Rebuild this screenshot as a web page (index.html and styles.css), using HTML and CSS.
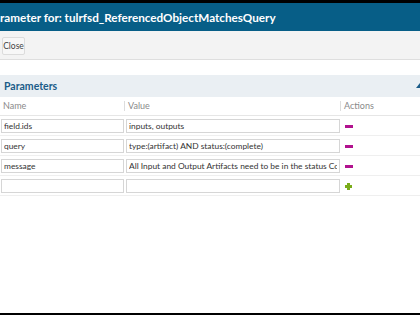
FILE: index.html
```html
<html><head>
<meta charset="UTF-8">
<meta name="viewport" content="width=device-width, initial-scale=1.0">
<title>Parameter for: tulrfsd_ReferencedObjectMatchesQuery</title>
<link rel="stylesheet" href="styles.css">
</head>
<body>
  <div class="dialog">
    <div class="titlebar"><span class="title">Parameter for: tulrfsd_ReferencedObjectMatchesQuery</span></div>

    <div class="toolbar">
      <button class="btn">Close</button>
    </div>

    <div class="panel">
      <div class="panel-header">
        <span>Parameters</span>
        <span class="collapse"></span>
      </div>

      <div class="grid-head">
        <div class="col">Name</div>
        <div class="col sep">Value</div>
        <div class="col sep">Actions</div>
        <div class="col sep"></div>
      </div>

      <div class="grid-row">
        <input class="cell name" value="field.ids">
        <input class="cell value" value="inputs, outputs">
        <span class="act"><span class="minus"></span></span>
      </div>
      <div class="grid-row">
        <input class="cell name" value="query">
        <input class="cell value" value="type:(artifact) AND status:(complete)">
        <span class="act"><span class="minus"></span></span>
      </div>
      <div class="grid-row">
        <input class="cell name" value="message">
        <input class="cell value" value="All Input and Output Artifacts need to be in the status Complete">
        <span class="act"><span class="minus"></span></span>
      </div>
      <div class="grid-row">
        <input class="cell name" value="">
        <input class="cell value" value="">
        <span class="act"><span class="plus"></span></span>
      </div>
    </div>
  </div>
</body></html>
```

FILE: styles.css
```css
body {
  margin: 0;
  background-color: #000;
  font-family: Lato, "Open Sans", sans-serif;
  overflow: hidden;
}
.dialog {
  margin-top: 3px;
  height: 310px;
  background-color: #fff;
}
.titlebar {
  height: 28px;
  line-height: 28px;
  background-color: #075e87;
  color: #fff;
  font-size: 11.7px;
  font-weight: bold;
  white-space: nowrap;
  overflow: hidden;
}
.title {
  display: inline-block;
  margin-left: -13px;
}
.toolbar {
  background-color: #f3f3f3;
  border-bottom: 1px solid #dedede;
  padding: 6px 0 0 2px;
  box-sizing: border-box;
  height: 29px;
}
.btn {
  height: 18px;
  width: 23px;
  padding: 0;
  font-family: inherit;
  font-size: 8.5px;
  color: #444;
  background-color: #f7f7f7;
  border: 1px solid #dcdcdc;
  border-radius: 2px;
}
.panel {
  margin-top: 15px;
}
.panel-header {
  height: 22px;
  background-color: #eaeff3;
  display: flex;
  align-items: center;
  justify-content: space-between;
  padding-left: 4px;
  font-size: 10.5px;
  font-weight: bold;
  color: #1b5c88;
}
.collapse {
  width: 0;
  height: 0;
  border-left: 4px solid transparent;
  border-right: 4px solid transparent;
  border-bottom: 5px solid #1b5c88;
  margin-right: -4px;
  margin-top: -2px;
}
.grid-head {
  display: grid;
  grid-template-columns: 124px 216px 44px 1fr;
  height: 18px;
  align-items: center;
  border-bottom: 1px solid #e6e6e6;
  font-size: 9px;
  color: #8a8a8a;
}
.col {
  padding-left: 3px;
  line-height: 10px;
}
.sep {
  border-left: 1px solid #dddddd;
}
.grid-row {
  display: grid;
  grid-template-columns: 125px 216px 1fr;
  align-items: center;
  height: 20px;
  box-sizing: border-box;
  padding: 1px 0 0 1px;
  border-bottom: 1px solid #efefef;
}
.cell {
  height: 14px;
  box-sizing: border-box;
  border: 1px solid #d6d6d6;
  padding: 0 2px;
  font-family: inherit;
  font-size: 8.4px;
  color: #333;
  outline: none;
}
.name {
  width: 123px;
}
.value {
  width: 214px;
}
.act {
  display: flex;
  align-items: center;
  padding-left: 3px;
}
.minus {
  width: 8px;
  height: 3px;
  background-color: #b2138f;
}
.plus {
  position: relative;
  width: 7px;
  height: 7px;
}
.plus::before, .plus::after {
  content: "";
  position: absolute;
  background-color: #7aac1a;
}
.plus::before {
  left: 0;
  top: 2px;
  width: 7px;
  height: 3px;
}
.plus::after {
  left: 2px;
  top: 0;
  width: 3px;
  height: 7px;
}
```
